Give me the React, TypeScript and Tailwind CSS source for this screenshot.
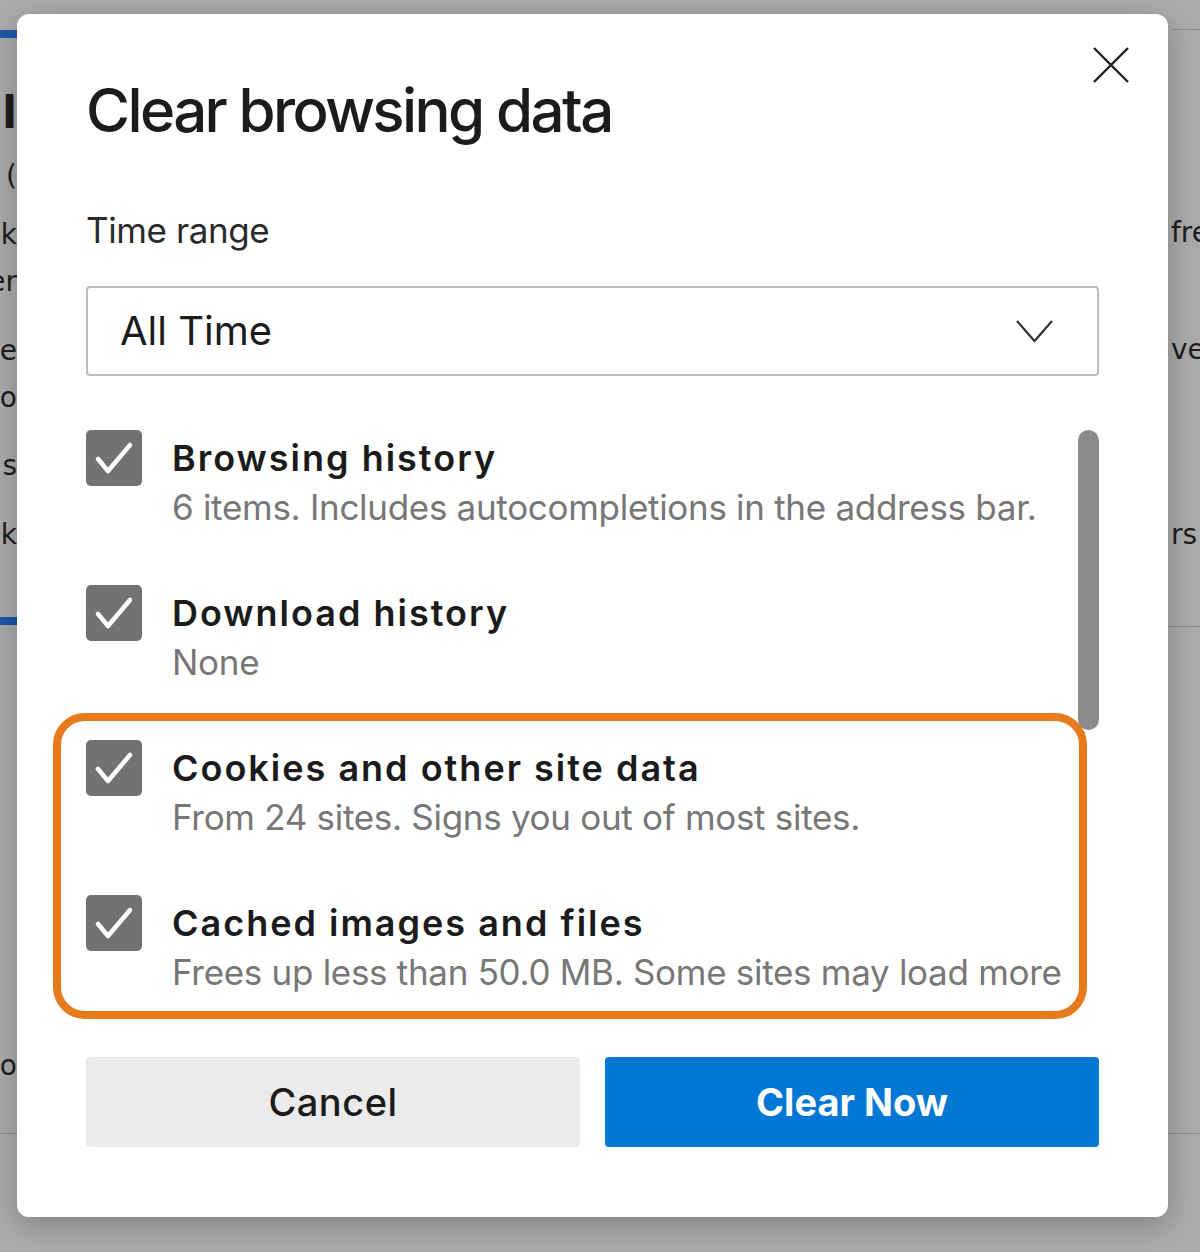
const items = [
  { title: 'Browsing history', desc: '6 items. Includes autocompletions in the address bar.' },
  { title: 'Download history', desc: 'None' },
  { title: 'Cookies and other site data', desc: 'From 24 sites. Signs you out of most sites.' },
  { title: 'Cached images and files', desc: 'Frees up less than 50.0 MB. Some sites may load more' },
];

const leftBits = [
  { text: 'l', mt: 'mt-[53px]', cls: 'h-[44px] text-[44px] leading-[44px] font-bold' },
  { text: '(', mt: 'mt-[26px]', cls: '' },
  { text: 'k', mt: 'mt-[29px]', cls: '' },
  { text: 'er', mt: 'mt-[17px]', cls: '' },
  { text: 'te', mt: 'mt-[39px]', cls: '' },
  { text: 'o', mt: 'mt-[17px]', cls: '' },
  { text: 's', mt: 'mt-[38px]', cls: '' },
  { text: 'k', mt: 'mt-[39px]', cls: '' },
];

const CheckBox = () => (
  <div className="w-[56px] h-[56px] shrink-0 rounded-[5px] bg-[#727272] flex items-center justify-center">
    <svg width="56" height="56" viewBox="0 0 56 56" fill="none">
      <polyline points="12,29 22,41 44,15" stroke="white" strokeWidth="4.5" strokeLinecap="round" strokeLinejoin="round" />
    </svg>
  </div>
);

const App = () => {
  return (
    <div className="relative w-[1200px] h-[1252px] overflow-hidden bg-[#ababab] flex text-[#1e1e1e]" style={{ fontFamily: '"DejaVu Sans", sans-serif' }}>
      {/* page behind the dialog */}
      <div className="w-[17px] shrink-0 flex flex-col items-end overflow-hidden pt-[30px]">
        <div className="w-full h-[8px] bg-[#1c57a5]" />
        {leftBits.map((b, i) => (
          <div key={i} className={`${b.mt} h-[30px] text-[28px] leading-[30px] whitespace-nowrap ${b.cls}`}>
            {b.text}
          </div>
        ))}
        <div className="mt-[67px] w-full h-[8px] bg-[#1c57a5]" />
        <div className="mt-[426px] h-[30px] text-[28px] leading-[30px]">o</div>
        <div className="mt-[52px] w-full h-[1px] bg-[#8f8f8f]" />
      </div>
      <div className="flex-1" />
      <div className="w-[32px] shrink-0 flex flex-col overflow-hidden pt-[29px] pl-[3px]">
        <div className="w-full h-[1px] bg-[#8a8a8a]" />
        <div className="mt-[188px] h-[30px] text-[28px] leading-[30px] whitespace-nowrap">fre</div>
        <div className="mt-[87px] h-[30px] text-[28px] leading-[30px] whitespace-nowrap">ver</div>
        <div className="mt-[155px] h-[30px] text-[28px] leading-[30px] whitespace-nowrap">rs</div>
        <div className="mt-[76px] -ml-[3px] w-[40px] h-[1px] bg-[#8a8a8a]" />
        <div className="mt-[506px] -ml-[3px] w-[40px] h-[1px] bg-[#8f8f8f]" />
      </div>

      {/* dialog */}
      <div
        className="absolute left-[17px] top-[14px] w-[1151px] h-[1203px] bg-white rounded-[12px] shadow-[0_8px_30px_rgba(0,0,0,0.25)] flex flex-col px-[69px] pt-[66px] text-[#1b1b1b]"
        style={{ fontFamily: 'Inter, "Noto Sans", sans-serif' }}
      >
        <button className="absolute right-[38px] top-[32px] w-[38px] h-[38px] flex items-center justify-center">
          <svg width="38" height="38" viewBox="0 0 38 38" fill="none">
            <path d="M2 2 L36 36 M36 2 L2 36" stroke="#1f1f1f" strokeWidth="2.4" />
          </svg>
        </button>

        <h1 className="text-[60px] leading-[60px] font-medium tracking-[-2.6px]">Clear browsing data</h1>

        <div className="mt-[73px] text-[35px] leading-[35px] tracking-[-0.4px] text-[#2a2a2a]">Time range</div>

        <div className="mt-[38px] h-[90px] border-2 border-[#bcbcbc] rounded-[4px] flex items-center justify-between pl-[32px] pr-[44px]">
          <span className="text-[40px] leading-[40px]">All Time</span>
          <svg width="37" height="23" viewBox="0 0 37 23" fill="none">
            <polyline points="1,1 18.5,21 36,1" stroke="#333" strokeWidth="2.2" />
          </svg>
        </div>

        <div className="mt-[54px] flex gap-[12px]">
          <div className="flex-1 min-w-0 overflow-hidden flex flex-col gap-[57px]">
            {items.map((it) => (
              <div key={it.title} className="flex items-start gap-[30px]">
                <CheckBox />
                <div className="flex flex-col whitespace-nowrap">
                  <div className="text-[36px] leading-[56px] font-semibold tracking-[2px]">{it.title}</div>
                  <div className="text-[35px] leading-[42px] tracking-[-0.3px] text-[#777777]">{it.desc}</div>
                </div>
              </div>
            ))}
          </div>
          <div className="w-[21px] shrink-0">
            <div className="h-[300px] rounded-full bg-[#8b8b8b]" />
          </div>
        </div>

        <div className="mt-[64px] flex gap-[25px]">
          <button className="flex-1 h-[90px] rounded-[4px] bg-[#ebebeb] text-[38px] font-medium tracking-[0.5px] text-[#1b1b1b]">Cancel</button>
          <button className="flex-1 h-[90px] rounded-[4px] bg-[#0177d4] text-[38px] font-bold text-white">Clear Now</button>
        </div>

        {/* highlight annotation */}
        <div className="absolute left-[36px] top-[699px] w-[1034px] h-[306px] border-[8px] border-[#e77b1c] rounded-[32px] pointer-events-none" />
      </div>
    </div>
  );
};

export default App;
